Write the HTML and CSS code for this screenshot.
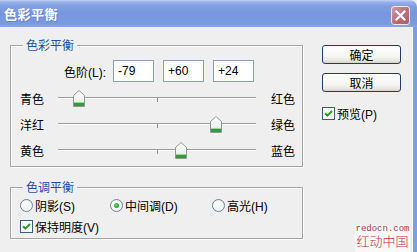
FILE: index.html
```html
<!DOCTYPE html>
<html lang="zh-CN">
<head>
<meta charset="utf-8">
<title>色彩平衡</title>
<link rel="stylesheet" href="styles.css">
</head>
<body>
<div class="window">
  <div class="titlebar">
    <span class="title">色彩平衡</span>
    <span class="close"><svg width="17" height="17" viewBox="0 0 17 17"><path d="M4.5 4.5 L12.5 12.5 M12.5 4.5 L4.5 12.5" stroke="#fff" stroke-width="2.2" stroke-linecap="square"/></svg></span>
  </div>
  <div class="client">
    <div class="main">
      <fieldset class="group balance">
        <legend>色彩平衡</legend>
        <div class="levels">
          <span class="levels-label">色阶(L):</span>
          <span class="num">-79</span>
          <span class="num">+60</span>
          <span class="num">+24</span>
        </div>
        <div class="slider-row first">
          <span class="lbl">青色</span>
          <div class="track"><span class="tick"></span><span class="thumb" style="left:10.5%"><svg width="12" height="17" viewBox="0 0 12 17"><defs><linearGradient id="tg1" x1="0" y1="0" x2="0" y2="1"><stop offset="0" stop-color="#ffffff"/><stop offset="1" stop-color="#e4ebe4"/></linearGradient></defs><path d="M6 0.5 L11.5 5.5 V16.5 H0.5 V5.5 Z" fill="url(#tg1)" stroke="#8d9890"/><rect x="1" y="13" width="10" height="3" fill="#2f9a3e"/><rect x="1" y="12" width="10" height="1" fill="#9fd3a6"/></svg></span></div>
          <span class="rlbl">红色</span>
        </div>
        <div class="slider-row">
          <span class="lbl">洋红</span>
          <div class="track"><span class="tick"></span><span class="thumb" style="left:80%"><svg width="12" height="17" viewBox="0 0 12 17"><path d="M6 0.5 L11.5 5.5 V16.5 H0.5 V5.5 Z" fill="url(#tg1)" stroke="#8d9890"/><rect x="1" y="13" width="10" height="3" fill="#2f9a3e"/><rect x="1" y="12" width="10" height="1" fill="#9fd3a6"/></svg></span></div>
          <span class="rlbl">绿色</span>
        </div>
        <div class="slider-row">
          <span class="lbl">黄色</span>
          <div class="track"><span class="tick"></span><span class="thumb" style="left:62%"><svg width="12" height="17" viewBox="0 0 12 17"><path d="M6 0.5 L11.5 5.5 V16.5 H0.5 V5.5 Z" fill="url(#tg1)" stroke="#8d9890"/><rect x="1" y="13" width="10" height="3" fill="#2f9a3e"/><rect x="1" y="12" width="10" height="1" fill="#9fd3a6"/></svg></span></div>
          <span class="rlbl">蓝色</span>
        </div>
      </fieldset>
      <fieldset class="group tone">
        <legend>色调平衡</legend>
        <div class="radios">
          <span class="radio r1"><span class="rb"></span>阴影(S)</span>
          <span class="radio r2"><span class="rb on"></span>中间调(D)</span>
          <span class="radio"><span class="rb"></span>高光(H)</span>
        </div>
        <div class="check-row">
          <span class="cb"><svg width="11" height="11" viewBox="0 0 11 11"><path d="M2 5.2 L4.4 7.6 L9 3" fill="none" stroke="#21a121" stroke-width="2"/></svg></span>保持明度(V)
        </div>
      </fieldset>
    </div>
    <div class="side">
      <button class="btn default">确定</button>
      <button class="btn">取消</button>
      <div class="check-row preview">
        <span class="cb"><svg width="11" height="11" viewBox="0 0 11 11"><path d="M2 5.2 L4.4 7.6 L9 3" fill="none" stroke="#21a121" stroke-width="2"/></svg></span>预览(P)
      </div>
    </div>
    <div class="watermark">
      <span class="wm-url">redocn.com</span>
      <span class="wm-cn">红动中国</span>
    </div>
  </div>
</div>
</body>
</html>
```
FILE: styles.css
```css
* { box-sizing: border-box; }
html, body {
  margin: 0;
  width: 417px;
  height: 252px;
  overflow: hidden;
  background: #efefef;
}
body {
  font-family: "Liberation Sans", "Noto Sans CJK SC", sans-serif;
  font-size: 12px;
  color: #000;
}
.window {
  width: 417px;
  height: 252px;
  display: flex;
  flex-direction: column;
}
.titlebar {
  height: 27px;
  flex: none;
  display: flex;
  align-items: center;
  justify-content: space-between;
  padding: 0 7px 0 4px;
  border-radius: 0 7px 0 0;
  background: linear-gradient(to bottom, #c3d3f5 0px, #98b2ea 2px, #809fe2 6px, #7796de 50%, #7a9ae0 88%, #8aa7e5 100%);
}
.title {
  color: #fff;
  font-family: "Noto Sans CJK SC", sans-serif;
  font-weight: bold;
  font-size: 13px;
  letter-spacing: 0.5px;
  text-shadow: 1px 1px 0 #6684c8;
}
.close {
  width: 19px;
  height: 19px;
  margin-top: 3px;
  border: 1px solid #f2e6ec;
  border-radius: 3px;
  background: linear-gradient(135deg, #d498a4 0%, #b8707c 50%, #a85e6a 100%);
  display: flex;
  align-items: center;
  justify-content: center;
}
.close svg { display: block; }
.client {
  flex: 1;
  display: flex;
  align-items: flex-start;
  position: relative;
  padding: 11px 0 0 10px;
  border-right: 4px solid #7d9ee2;
  box-shadow: inset -1px 0 0 #fafafa;
}
.main { width: 293px; flex: none; }
.group {
  margin: 0;
  padding: 0 0 0 9px;
  border: 1px solid #a5a5a5;
  box-shadow: inset 1px 1px 0 #fff, 1px 1px 0 #fff;
  min-width: 0;
}
.group legend {
  margin-left: 3px;
  padding: 0 3px;
  line-height: 14px;
  color: #1d4fa6;
  background: #efefef;
  font-family: "Noto Sans CJK SC", sans-serif;
}
.balance { padding-bottom: 3px; }
.levels {
  display: flex;
  align-items: center;
  margin-top: 8px;
  padding-left: 36px;
  height: 22px;
  gap: 9px;
}
.levels-label {
  width: 50px;
  text-align: right;
  margin-right: -2px;
}
.num {
  width: 41px;
  height: 22px;
  border: 1px solid #8aa0b8;
  background: #fff;
  padding-left: 4px;
  line-height: 20px;
}
.slider-row {
  display: flex;
  align-items: center;
  height: 26px;
}
.slider-row.first { margin-top: 3px; }
.lbl { width: 38px; }
.track {
  width: 198px;
  height: 2px;
  position: relative;
  border-top: 1px solid #9c9c9c;
  border-bottom: 1px solid #ffffff;
}
.tick {
  position: absolute;
  left: 99px;
  top: 0;
  width: 1px;
  height: 4px;
  background: #8e8e8e;
}
.thumb {
  position: absolute;
  top: -8px;
  width: 12px;
  height: 17px;
  transform: translateX(-50%);
}
.thumb svg { display: block; }
.rlbl { margin-left: 15px; }
.tone {
  margin-top: 13px;
  padding-top: 1px;
  padding-bottom: 1px;
}
.radios {
  display: flex;
  align-items: center;
  height: 21px;
}
.radio {
  display: flex;
  align-items: center;
  gap: 2px;
}
.r1 { width: 90px; }
.r2 { width: 102px; }
.rb {
  width: 13px;
  height: 13px;
  border-radius: 50%;
  border: 1px solid #6f8196;
  background: radial-gradient(circle at 40% 40%, #ffffff 0%, #eef0f2 70%, #dcdfe3 100%);
  position: relative;
}
.rb.on::after {
  content: "";
  position: absolute;
  left: 3px;
  top: 3px;
  width: 5px;
  height: 5px;
  border-radius: 50%;
  background: radial-gradient(circle at 40% 40%, #6fd46f 0%, #21a121 70%);
}
.check-row {
  display: flex;
  align-items: center;
  gap: 2px;
  height: 21px;
}
.cb {
  width: 13px;
  height: 13px;
  border: 1px solid #3f5a78;
  background: #fff;
  display: flex;
  align-items: center;
  justify-content: center;
}
.cb svg { display: block; }
.side {
  margin-left: 19px;
  width: 79px;
  display: flex;
  flex-direction: column;
  padding-top: 7px;
}
.btn {
  height: 19px;
  margin: 0 0 9px 0;
  padding: 0;
  border: 1px solid #1e3c6e;
  border-radius: 3px;
  background: linear-gradient(to bottom, #ffffff 0%, #f6f6f3 60%, #e6e3da 90%, #d6d0c5 100%);
  font-family: "Noto Sans CJK SC", sans-serif;
  font-size: 12px;
  line-height: 16px;
  color: #000;
}
.preview {
  margin-top: 6px;
  height: 13px;
}
.watermark {
  position: absolute;
  right: 3px;
  bottom: 0;
  width: 55px;
  height: 27px;
  background: #f9f9f9;
  display: flex;
  flex-direction: column;
  align-items: center;
}
.wm-url {
  font-family: "Liberation Mono", monospace;
  font-size: 9px;
  line-height: 9px;
  color: #9c3848;
}
.wm-cn {
  font-family: "Noto Sans CJK SC", sans-serif;
  font-size: 13px;
  line-height: 13px;
  color: #c8303c;
  font-weight: 300;
}
```
